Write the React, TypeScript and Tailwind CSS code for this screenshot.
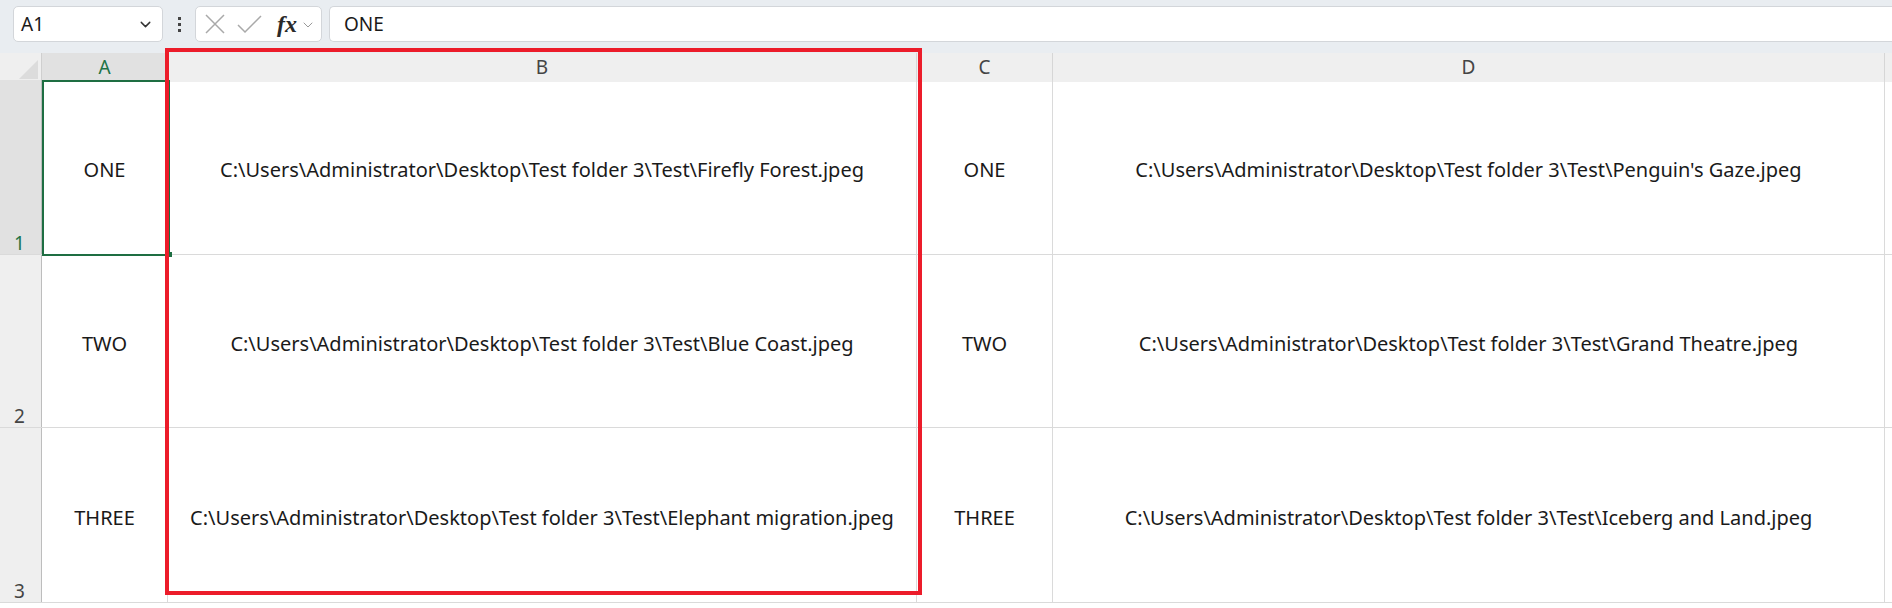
import { ChevronDown } from 'lucide-react';

const rows = [
  { n: '1', a: 'ONE', b: 'C:\\Users\\Administrator\\Desktop\\Test folder 3\\Test\\Firefly Forest.jpeg', c: 'ONE', d: "C:\\Users\\Administrator\\Desktop\\Test folder 3\\Test\\Penguin's Gaze.jpeg", h: 'h-[175px]' },
  { n: '2', a: 'TWO', b: 'C:\\Users\\Administrator\\Desktop\\Test folder 3\\Test\\Blue Coast.jpeg', c: 'TWO', d: 'C:\\Users\\Administrator\\Desktop\\Test folder 3\\Test\\Grand Theatre.jpeg', h: 'h-[173px]' },
  { n: '3', a: 'THREE', b: 'C:\\Users\\Administrator\\Desktop\\Test folder 3\\Test\\Elephant migration.jpeg', c: 'THREE', d: 'C:\\Users\\Administrator\\Desktop\\Test folder 3\\Test\\Iceberg and Land.jpeg', h: 'h-[175px]' },
];

const cols = 'grid grid-cols-[42px_126px_749px_136px_832px_7px]';

export default function App() {
  return (
    <div className="relative w-[1892px] h-[608px] overflow-hidden bg-white text-[#1a1a1a] font-['Noto_Sans','Liberation_Sans',sans-serif]">
      {/* formula bar */}
      <div className="h-[43px] bg-[#e9edf1] flex items-start pt-[6px]">
        <div className="ml-[13px] w-[150px] h-[36px] bg-white border border-[#d3d6da] rounded-[5px] flex items-center justify-between pl-[7px] pr-[8px]">
          <span className="text-[19px]">A1</span>
          <ChevronDown className="w-[17px] h-[17px] text-[#333]" strokeWidth={2} />
        </div>
        <div className="w-[32px] h-[36px] flex flex-col items-center justify-center gap-[3px]">
          <span className="w-[3px] h-[3px] bg-[#444]" />
          <span className="w-[3px] h-[3px] bg-[#444]" />
          <span className="w-[3px] h-[3px] bg-[#444]" />
        </div>
        <div className="w-[127px] h-[36px] bg-white border border-[#d3d6da] rounded-[5px] flex items-center pl-[8px]">
          <svg width="22" height="22" viewBox="0 0 22 22" className="text-[#a9a9a9]">
            <path d="M2 2L20 20M20 2L2 20" stroke="currentColor" strokeWidth="1.5" fill="none" />
          </svg>
          <svg width="25" height="20" viewBox="0 0 25 20" className="ml-[11px] text-[#a9a9a9]">
            <path d="M1 11L8 18L24 2" stroke="currentColor" strokeWidth="1.5" fill="none" />
          </svg>
          <span className="ml-[15px] italic font-bold text-[24px] leading-none text-[#2a2a2a] font-['Liberation_Serif',serif]">fx</span>
          <ChevronDown className="ml-[3px] mt-[2px] w-[16px] h-[16px] text-[#999]" strokeWidth={1.5} />
        </div>
        <div className="ml-[7px] flex-1 h-[36px] bg-white border border-[#d3d6da] rounded-l-[5px] border-r-0 flex items-center pl-[14px]">
          <span className="text-[19px]">ONE</span>
        </div>
      </div>
      <div className="h-[10px] bg-[#e9edf1]" />

      {/* column headers */}
      <div className={`${cols} h-[27px] border-b border-[#ababab] text-[19px] text-[#444]`}>
        <div className="bg-[#efefef] border-r border-[#cfcfcf] flex items-end justify-end pr-[3px] pb-[3px]">
          <div className="w-0 h-0 border-l-[19px] border-l-transparent border-b-[19px] border-b-[#dcdcdc]" />
        </div>
        <div className="bg-[#e1e1e1] flex items-center justify-center text-[#217346] border-r border-[#d6d6d6]">A</div>
        <div className="bg-[#efefef] flex items-center justify-center border-r border-[#d6d6d6]">B</div>
        <div className="bg-[#efefef] flex items-center justify-center border-r border-[#d6d6d6]">C</div>
        <div className="bg-[#efefef] flex items-center justify-center border-r border-[#d6d6d6]">D</div>
        <div className="bg-[#efefef]" />
      </div>

      {/* rows */}
      {rows.map((r, i) => (
        <div key={r.n} className={`${cols} ${r.h} border-b border-[#dadada] text-[20px]`}>
          <div className={`${i === 0 ? 'bg-[#e1e1e1] text-[#217346]' : 'bg-[#efefef] text-[#444]'} border-r border-[#bdbdbd] flex items-end pl-[14px] text-[19px] leading-[22px]`}>
            {r.n}
          </div>
          <div className="border-r border-[#dadada] flex items-center justify-center pt-[5px]">{r.a}</div>
          <div className="border-r border-[#dadada] flex items-center justify-center pt-[5px]">{r.b}</div>
          <div className="border-r border-[#dadada] flex items-center justify-center pt-[5px]">{r.c}</div>
          <div className="border-r border-[#dadada] flex items-center justify-center pt-[5px]">{r.d}</div>
          <div />
        </div>
      ))}

      {/* selected cell A1 */}
      <div className="absolute left-[42px] top-[80px] w-[128px] h-[176px] border-2 border-[#1e6e42]" />
      <div className="absolute left-[167px] top-[252px] w-[5px] h-[5px] bg-[#1e6e42]" />

      {/* red annotation box */}
      <div className="absolute left-[165px] top-[48px] w-[757px] h-[547px] border-[4px] border-[#ec1c2a]" />
    </div>
  );
}
